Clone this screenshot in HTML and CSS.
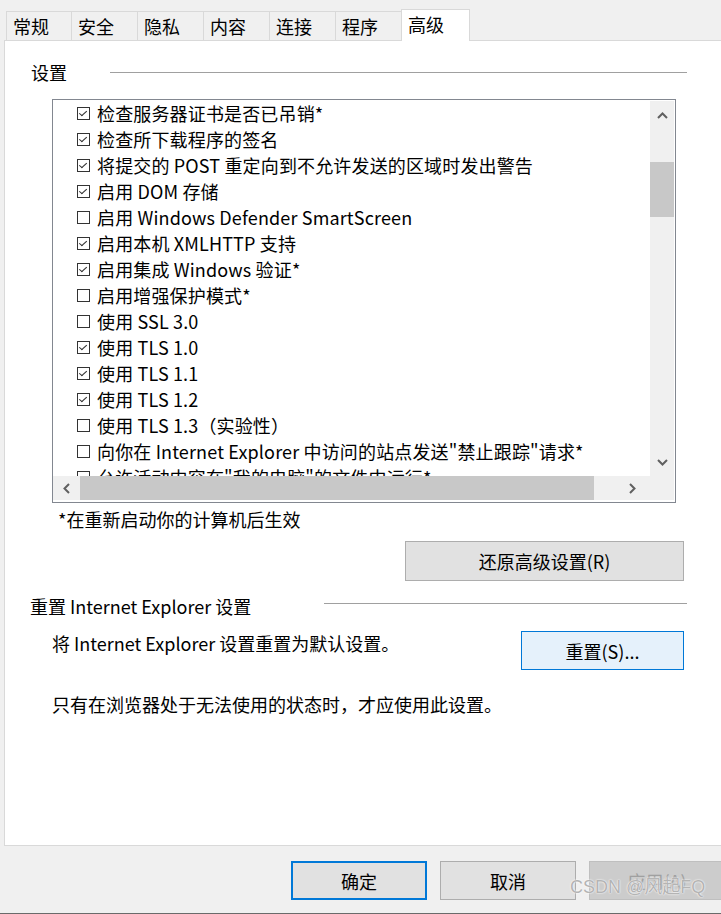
FILE: index.html
```html
<!DOCTYPE html>
<html lang="zh-CN">
<head>
<meta charset="utf-8">
<title>Internet 选项 - 高级</title>
<link rel="stylesheet" href="styles.css">
</head>
<body>
<div class="window">
  <div class="tabs">
    <div class="tab tab-first">常规</div>
    <div class="tab">安全</div>
    <div class="tab">隐私</div>
    <div class="tab">内容</div>
    <div class="tab">连接</div>
    <div class="tab">程序</div>
    <div class="tab tab-active">高级</div>
  </div>
  <div class="panel">
    <div class="group-head head-settings">
      <span class="group-label">设置</span>
      <span class="group-line line-settings"></span>
    </div>
    <div class="listbox">
      <div class="list-view">
        <ul class="items">
          <li class="item"><span class="cb checked"></span><span>检查服务器证书是否已吊销*</span></li>
          <li class="item"><span class="cb checked"></span><span>检查所下载程序的签名</span></li>
          <li class="item"><span class="cb checked"></span><span>将提交的 POST 重定向到不允许发送的区域时发出警告</span></li>
          <li class="item"><span class="cb checked"></span><span>启用 DOM 存储</span></li>
          <li class="item"><span class="cb"></span><span>启用 Windows Defender SmartScreen</span></li>
          <li class="item"><span class="cb checked"></span><span>启用本机 XMLHTTP 支持</span></li>
          <li class="item"><span class="cb checked"></span><span>启用集成 Windows 验证*</span></li>
          <li class="item"><span class="cb"></span><span>启用增强保护模式*</span></li>
          <li class="item"><span class="cb"></span><span>使用 SSL 3.0</span></li>
          <li class="item"><span class="cb checked"></span><span>使用 TLS 1.0</span></li>
          <li class="item"><span class="cb checked"></span><span>使用 TLS 1.1</span></li>
          <li class="item"><span class="cb checked"></span><span>使用 TLS 1.2</span></li>
          <li class="item"><span class="cb"></span><span>使用 TLS 1.3（实验性）</span></li>
          <li class="item"><span class="cb"></span><span>向你在 Internet Explorer 中访问的站点发送"禁止跟踪"请求*</span></li>
          <li class="item"><span class="cb"></span><span>允许活动内容在"我的电脑"的文件中运行*</span></li>
        </ul>
      </div>
      <div class="vscroll">
        <div class="arrow arrow-up">
          <svg width="11" height="7" viewBox="0 0 11 7"><path d="M1 6 L5.5 1.5 L10 6" fill="none" stroke="#606060" stroke-width="2"/></svg>
        </div>
        <div class="vthumb"></div>
        <div class="arrow arrow-down">
          <svg width="11" height="7" viewBox="0 0 11 7"><path d="M1 1 L5.5 5.5 L10 1" fill="none" stroke="#606060" stroke-width="2"/></svg>
        </div>
      </div>
      <div class="hscroll">
        <div class="harrow harrow-left">
          <svg width="7" height="11" viewBox="0 0 7 11"><path d="M6 1 L1.5 5.5 L6 10" fill="none" stroke="#606060" stroke-width="2"/></svg>
        </div>
        <div class="hthumb"></div>
        <div class="harrow harrow-right">
          <svg width="7" height="11" viewBox="0 0 7 11"><path d="M1 1 L5.5 5.5 L1 10" fill="none" stroke="#606060" stroke-width="2"/></svg>
        </div>
      </div>
    </div>
    <div class="note">*在重新启动你的计算机后生效</div>
    <div class="restore-row">
      <button class="btn btn-restore">还原高级设置(R)</button>
    </div>
    <div class="group-head head-reset">
      <span class="group-label">重置 Internet Explorer 设置</span>
      <span class="group-line line-reset"></span>
    </div>
    <div class="reset-row">
      <span class="reset-text">将 Internet Explorer 设置重置为默认设置。</span>
      <button class="btn btn-reset">重置(S)...</button>
    </div>
    <div class="hint">只有在浏览器处于无法使用的状态时，才应使用此设置。</div>
  </div>
  <div class="footer">
    <button class="btn btn-footer btn-ok">确定</button>
    <button class="btn btn-footer">取消</button>
    <button class="btn btn-footer btn-disabled">应用(A)</button>
  </div>
  <div class="watermark">CSDN @风起FQ</div>
</div>
</body>
</html>
```

FILE: styles.css
```css
* {
  box-sizing: border-box;
}

html, body {
  margin: 0;
  padding: 0;
  background: #f0f0f0;
}

body {
  font-family: "Noto Sans CJK SC", "Noto Sans", sans-serif;
  font-size: 18px;
  color: #000;
}

.window {
  position: relative;
  width: 721px;
  height: 914px;
  overflow: hidden;
  border-bottom: 1px solid #6a6a6a;
}

/* tabs */
.tabs {
  display: flex;
  align-items: flex-end;
  height: 40px;
  padding-left: 6px;
}

.tab {
  width: 66px;
  height: 29px;
  border-left: 1px solid #d9d9d9;
  border-top: 1px solid #d9d9d9;
  background: #f0f0f0;
  padding-left: 6px;
  line-height: 28px;
  white-space: nowrap;
}

.tab-first {
  width: 65px;
}

.tab-active {
  position: relative;
  z-index: 1;
  width: 69px;
  height: 32px;
  margin-bottom: -1px;
  border-right: 1px solid #d9d9d9;
  background: #fff;
  line-height: 29px;
}

/* panel */
.panel {
  height: 806px;
  margin-left: 4px;
  background: #fff;
  border-left: 1px solid #d9d9d9;
  border-top: 1px solid #d9d9d9;
  border-bottom: 1px solid #d9d9d9;
  display: flex;
  flex-direction: column;
}

.group-head {
  display: flex;
  align-items: center;
  height: 24px;
}

.group-label {
  line-height: 24px;
  white-space: nowrap;
}

.group-line {
  height: 1px;
  background: #a0a0a0;
  margin-left: auto;
  margin-right: 34px;
}

.head-settings {
  margin-top: 19px;
  padding-left: 26px;
}

.line-settings {
  width: 577px;
}

.head-reset {
  margin-top: 13px;
  padding-left: 25px;
}

.line-reset {
  width: 363px;
  margin-bottom: 6px;
}

/* listbox */
.listbox {
  margin-top: 15px;
  margin-left: 47px;
  width: 624px;
  height: 404px;
  border: 1px solid #828790;
  padding: 1px 1px 2px 0;
  display: grid;
  grid-template-columns: 1fr 24px;
  grid-template-rows: 375px 24px;
}

.list-view {
  overflow: hidden;
  background: #fff;
}

.items {
  list-style: none;
  margin: -1px 0 0 0;
  padding: 0;
}

.item {
  display: flex;
  align-items: center;
  height: 26px;
  padding-left: 24px;
  white-space: nowrap;
  letter-spacing: 0.15px;
}

.cb {
  flex: none;
  width: 13px;
  height: 13px;
  border: 1px solid #333;
  margin-right: 7px;
  margin-top: 1px;
  background: #fff;
  position: relative;
}

.cb.checked::after {
  content: "";
  position: absolute;
  left: 3px;
  top: 1px;
  width: 3px;
  height: 6px;
  border-right: 1px solid #333;
  border-bottom: 1px solid #333;
  transform: rotate(40deg) skewX(-8deg);
}

.vscroll {
  background: #f0f0f0;
  position: relative;
}

.arrow {
  height: 27px;
  display: flex;
  align-items: center;
  justify-content: center;
}

.arrow-up {
  padding-top: 1px;
}

.vthumb {
  position: absolute;
  left: 0;
  right: 0;
  top: 61px;
  height: 55px;
  background: #c8c8c8;
}

.arrow-down {
  position: absolute;
  left: 0;
  right: 0;
  bottom: 0;
}

.hscroll {
  grid-column: 1 / 3;
  background: #f0f0f0;
  display: flex;
  align-items: stretch;
}

.harrow {
  width: 27px;
  display: flex;
  align-items: center;
  justify-content: center;
}

.hthumb {
  width: 514px;
  background: #c8c8c8;
}

.harrow-right {
  margin-left: 25px;
}

/* below list */
.note {
  margin-top: 4px;
  padding-left: 53px;
  line-height: 24px;
}

.restore-row {
  margin-top: 10px;
  padding-left: 400px;
}

.btn {
  font-family: inherit;
  font-size: 18px;
  color: #000;
  background: #e1e1e1;
  border: 1px solid #adadad;
  border-radius: 0;
  padding: 0;
  margin: 0;
}

.btn-restore {
  width: 279px;
  height: 40px;
}

.reset-row {
  margin-top: 13px;
  display: flex;
  align-items: flex-start;
  padding-left: 47px;
}

.reset-text {
  line-height: 24px;
}

.btn-reset {
  margin-left: auto;
  margin-right: 37px;
  width: 163px;
  height: 39px;
  background: #e5f1fb;
  border-color: #0078d7;
}

.hint {
  margin-top: 22px;
  padding-left: 47px;
  line-height: 24px;
}

/* footer */
.footer {
  display: flex;
  gap: 13px;
  padding-top: 15px;
  padding-left: 291px;
}

.btn-footer {
  flex: none;
  width: 136px;
  height: 39px;
}

.btn-ok {
  border: 2px solid #0078d7;
}

.btn-disabled {
  background: #cccccc;
  border-color: #bfbfbf;
  color: #a0a0a0;
}

.watermark {
  position: absolute;
  left: 570px;
  top: 872px;
  font-size: 18px;
  color: #b4b4b4;
  text-shadow: 0 0 2px #fff, 0 0 1px #fff;
  white-space: nowrap;
  font-family: "Liberation Sans", "Noto Sans CJK SC", sans-serif;
}
```
